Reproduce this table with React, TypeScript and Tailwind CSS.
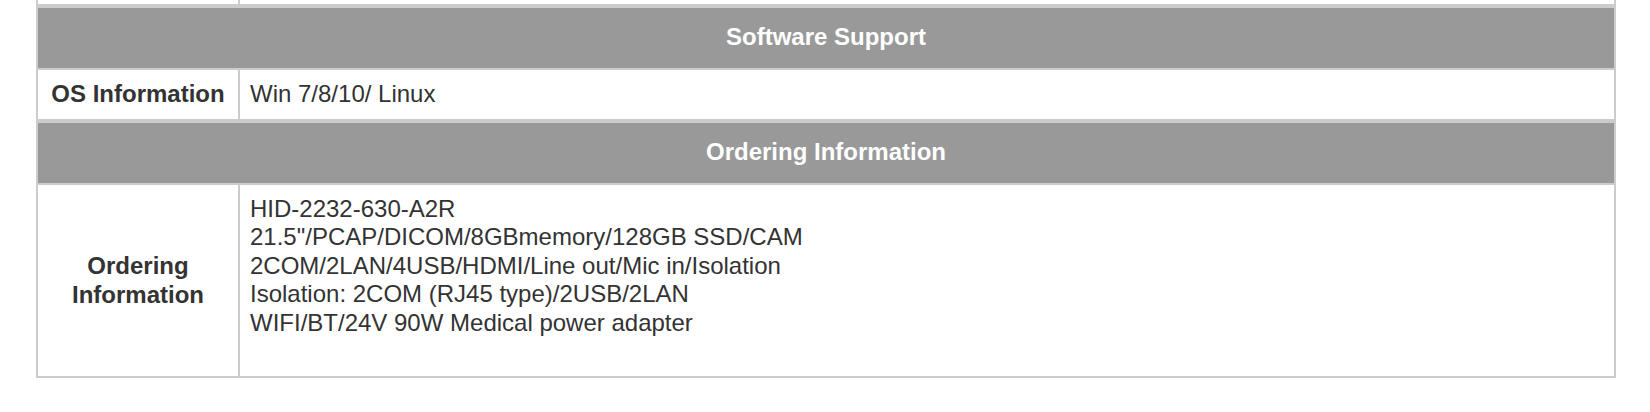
import React from "react";

const ordering = [
  "HID-2232-630-A2R",
  '21.5"/PCAP/DICOM/8GBmemory/128GB SSD/CAM',
  "2COM/2LAN/4USB/HDMI/Line out/Mic in/Isolation",
  "Isolation: 2COM (RJ45 type)/2USB/2LAN",
  "WIFI/BT/24V 90W Medical power adapter",
];

function SectionHeader({ title }: { title: string }) {
  return (
    <div className="h-[60px] bg-[#999999] flex items-center justify-center pb-[1px] text-white font-bold text-[24px] leading-[28.4px]">
      {title}
    </div>
  );
}

export default function App() {
  return (
    <div className="w-[1650px] h-[412px] bg-white text-[#333333] font-['Liberation_Sans',Arial,sans-serif]">
      <div className="ml-[36px] w-[1580px] border-x-2 border-b-2 border-[#cccccc]">
        {/* tail of the previous row */}
        <div className="h-[4px] flex">
          <div className="w-[200px]" />
          <div className="flex-1 border-l-2 border-[#cccccc]" />
        </div>
        <div className="h-[4px] bg-[#cccccc]" />
        <SectionHeader title="Software Support" />
        <div className="h-[2px] bg-[#cccccc]" />

        <div className="h-[49px] flex text-[24px] leading-[28.4px]">
          <div className="w-[200px] flex items-center justify-center pb-[1px] font-bold">
            OS Information
          </div>
          <div className="flex-1 border-l-2 border-[#cccccc] flex items-center pb-[1px] pl-[10px]">
            Win 7/8/10/ Linux
          </div>
        </div>

        <div className="h-[4px] bg-[#cccccc]" />
        <SectionHeader title="Ordering Information" />
        <div className="h-[2px] bg-[#cccccc]" />

        <div className="h-[191px] flex text-[24px] leading-[28.4px]">
          <div className="w-[200px] flex items-center justify-center text-center font-bold">
            Ordering
            <br />
            Information
          </div>
          <div className="flex-1 border-l-2 border-[#cccccc] pl-[10px] pt-[10px]">
            {ordering.map((line) => (
              <div key={line}>{line}</div>
            ))}
          </div>
        </div>
      </div>
    </div>
  );
}
